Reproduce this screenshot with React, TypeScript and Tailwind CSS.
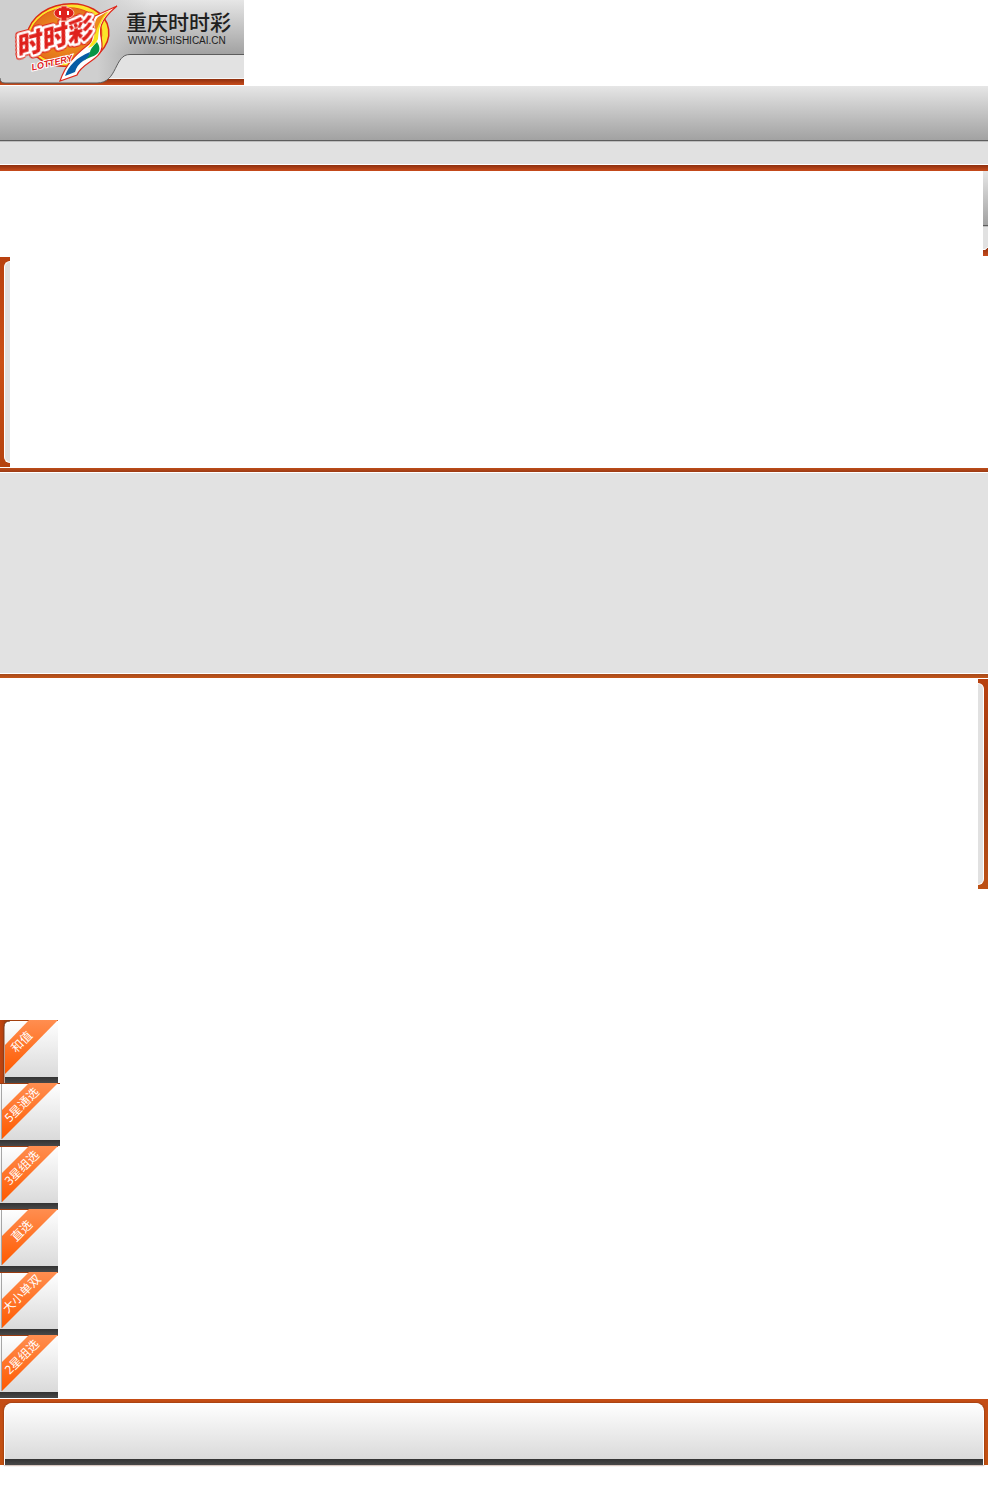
const tiles = [
  { label: "和值", first: true, width: "w-[58px]" },
  { label: "5星通选", first: false, width: "w-[60px]" },
  { label: "3星组选", first: false, width: "w-[58px]" },
  { label: "直选", first: false, width: "w-[58px]" },
  { label: "大小单双", first: false, width: "w-[58px]" },
  { label: "2星组选", first: false, width: "w-[58px]" },
];

function Logo() {
  return (
    <svg width="244" height="85" viewBox="0 0 244 85" role="img" aria-label="重庆时时彩" className="block">
      <defs>
        <linearGradient id="steel" x1="0" y1="0" x2="0" y2="1">
          <stop offset="0" stopColor="#e6e6e6" />
          <stop offset="1" stopColor="#a2a2a2" />
        </linearGradient>
        <linearGradient id="brushed" gradientUnits="userSpaceOnUse" x1="0" y1="0" x2="0" y2="54">
          <stop offset="0" stopColor="#e6e6e6" />
          <stop offset="1" stopColor="#a2a2a2" />
        </linearGradient>
        <linearGradient id="plate" x1="0" y1="0" x2="1" y2="0">
          <stop offset="0" stopColor="#cfcfcf" />
          <stop offset="0.4" stopColor="#cfcfcf" />
          <stop offset="0.62" stopColor="#cccccc" stopOpacity="0" />
        </linearGradient>
        <linearGradient id="rust" x1="0" y1="0" x2="0" y2="1">
          <stop offset="0" stopColor="#8e2f0e" />
          <stop offset="1" stopColor="#c84c1c" />
        </linearGradient>
        <radialGradient id="sun">
          <stop offset="0" stopColor="#f2a01c" />
          <stop offset="1" stopColor="#e3701c" />
        </radialGradient>
      </defs>
      <rect width="244" height="85" fill="#e2e2e2" />
      <rect y="78" width="244" height="1" fill="#f6f6f6" />
      <rect y="79" width="244" height="6" fill="url(#rust)" />
      <path d="M0 0H244V54H130C114 54 118 83 97 83H5Q0 83 0 78Z" fill="url(#brushed)" />
      <path d="M0 0H244V54H130C114 54 118 83 97 83H5Q0 83 0 78Z" fill="url(#plate)" />
      <path d="M244 54.5H130C114 54 118 83 97 83H5Q0 83 0 78" fill="none" stroke="#5d5d5d" />
      <ellipse cx="68" cy="35" rx="41" ry="31" transform="rotate(-8 68 35)" fill="#fbe62a" stroke="#d92c19" strokeWidth="1.5" />
      <ellipse cx="66" cy="35" rx="36" ry="27" transform="rotate(-8 66 35)" fill="url(#sun)" stroke="#e9501c" />
      <path d="M117 6L95 16C88 26 96 38 89 44C81 51 67 60 60 81L77 75C81 63 101 60 102 47C103 34 92 27 117 6Z" fill="#fff" stroke="#e0281b" strokeWidth="1.2" />
      <path d="M111 10L98 18C92 25 97 35 92 42L88 48Q95 46 98 39C99 30 99 21 111 10Z" fill="#f8e51d" />
      <path d="M108 11L98 17C93 22 96 29 95 34C98 27 100 19 108 11Z" fill="#ee8a1b" />
      <path d="M97 42Q104 53 91 57Q86 59 83 61Q90 55 90 52Q90 49 97 42Z" fill="#079445" />
      <path d="M90 52Q90 57 83 61Q77 65 75 72L65 76C69 65 76 58 90 52Z" fill="#075ca5" />
      <g
        transform="rotate(-15 20 56)"
        className="font-['Noto_Sans_CJK_SC',sans-serif] text-[26px] font-black italic filter-[drop-shadow(0_1px_0_#e0281b)_drop-shadow(-1px_0_0_#e0281b)_drop-shadow(0_-1px_0_#e0281b)]"
        fill="#df211c"
        stroke="#fff"
        strokeWidth="5"
        strokeLinejoin="round"
        paintOrder="stroke"
      >
        <text x="18" y="56">时时彩</text>
      </g>
      <ellipse cx="64" cy="13" rx="10" ry="6" fill="#df211c" stroke="#f6b7a2" />
      <path d="M61 6H67V21H61Z" fill="#df211c" stroke="#f6b7a2" />
      <ellipse cx="64" cy="13" rx="9" ry="5" fill="#df211c" />
      <path d="M59 11H61V15H59ZM67 11H69V15H67Z" fill="#fff" />
      <g transform="rotate(-13 34 69)">
        <text x="32" y="70" className="font-['Liberation_Sans',sans-serif] text-[9px] font-bold italic" fill="#df211c" stroke="#fff" strokeWidth="2" paintOrder="stroke">LOTTERY</text>
      </g>
      <text x="126" y="30" className="font-['Noto_Sans_CJK_SC',sans-serif] text-[21px] font-medium" fill="#202020">重庆时时彩</text>
      <text x="128" y="44" className="font-['Liberation_Sans',sans-serif] text-[10px]" fill="#202020">WWW.SHISHICAI.CN</text>
    </svg>
  );
}

function Tile({ label, first, width }: { label: string; first: boolean; width: string }) {
  return (
    <li className={`relative flex h-[63px] ${width} ${first ? "bg-[linear-gradient(90deg,#c2450f,#b0400f_4px,#fff_4px)]" : "bg-white"}`}>
      <a href="#bets" className="block h-full w-full">
        <svg width="100%" height="63" className="block" aria-hidden="true">
          <defs>
            <linearGradient id="silver" x1="0" y1="0" x2="0" y2="1">
              <stop offset="0" stopColor="#ffffff" />
              <stop offset="1" stopColor="#dadada" />
            </linearGradient>
            <linearGradient id="ribbon" x1="0" y1="0" x2="0" y2="1">
              <stop offset="0" stopColor="#ff8e50" />
              <stop offset="1" stopColor="#ff5a00" />
            </linearGradient>
            <linearGradient id="coal" x1="0" y1="0" x2="0" y2="1">
              <stop offset="0" stopColor="#333333" />
              <stop offset="1" stopColor="#484848" />
            </linearGradient>
          </defs>
          {first ? (
            <>
              <rect x="4" width="54" height="8" fill="#a4400f" />
              <path d="M4 63V7Q4 1 10 1H58V63Z" fill="#fff" />
              <path d="M5 57V7Q5 1 11 1H58V57Z" fill="url(#silver)" />
              <path d="M4 63V7Q4 1 10 1" fill="none" stroke="#7a3a1c" />
              <rect x="5" y="57" width="53" height="6" fill="url(#coal)" />
              <path d="M29 0H58L5 54V25Z" fill="url(#ribbon)" />
            </>
          ) : (
            <>
              <rect width="100%" height="57" fill="url(#silver)" />
              <rect width="100%" height="1" fill="#9c3c10" />
              <rect x="1" y="1" width="1" height="55" fill="#a6a6a6" />
              <rect y="57" width="100%" height="6" fill="url(#coal)" />
              <path d="M29 0H58L2 56V27Z" fill="url(#ribbon)" />
            </>
          )}
        </svg>
        <span className="absolute top-0 left-0 flex h-[44px] w-[44px] -rotate-45 items-center justify-center text-xs leading-none whitespace-nowrap text-white">
          {label}
        </span>
      </a>
    </li>
  );
}

export default function App() {
  return (
    <div className="flex flex-col bg-white pb-[35px] font-['Noto_Sans','Noto_Sans_CJK_SC',sans-serif]">
      <header>
        <a href="#home" className="block w-fit">
          <Logo />
        </a>
        <div className="mt-px flex flex-col">
          <div className="h-[54px] bg-linear-to-b from-[#e6e6e6] to-[#a2a2a2]" />
          <div className="h-px bg-[#5d5d5d]" />
          <div className="h-px bg-[#bdbdbd]" />
          <div className="h-[22px] bg-[#e1e1e1]" />
          <div className="h-px bg-white" />
          <div className="h-1.5 bg-linear-to-b from-[#8e2f0e] to-[#c84c1c]" />
        </div>
        <div className="flex justify-end">
          <svg width="5" height="85" className="block" aria-hidden="true">
            <rect width="5" height="85" fill="#e1e1e1" />
            <rect width="5" height="54" fill="url(#steel)" />
            <rect y="54" width="5" height="1" fill="#5d5d5d" />
            <rect y="55" width="5" height="1" fill="#bdbdbd" />
            <path d="M0 79L2 79L5 76V85H0Z" fill="url(#rust)" />
            <path d="M0 78.500H2L5 76" fill="none" stroke="#fff" />
          </svg>
        </div>
      </header>

      <main className="flex flex-col">
        <div className="mt-px flex h-[210px] w-2.5 bg-linear-to-b from-[#b8410f] via-[#cb5016] to-[#b5430f] py-1 pl-1">
          <div className="w-full rounded-l-md border-y border-l border-white bg-[#e1e1e1]" />
        </div>
        <div className="mt-px flex h-[210px] flex-col">
          <div className="h-1 bg-linear-to-b from-[#bd4c19] to-[#9c3b14]" />
          <div className="my-px flex-1 bg-[#e2e2e2]" />
          <div className="h-1 bg-linear-to-b from-[#a64a1a] to-[#c45519]" />
        </div>
        <div className="mt-px flex h-[210px] w-2.5 self-end bg-linear-to-b from-[#b8410f] via-[#9d3d13] to-[#bd5115] py-1 pr-1">
          <div className="w-full rounded-r-md border-y border-r border-white bg-[#e1e1e1]" />
        </div>
        <nav aria-label="玩法" className="mt-[131px]">
          <ul className="flex flex-col">
            {tiles.map((tile) => (
              <Tile key={tile.label} {...tile} />
            ))}
          </ul>
        </nav>
      </main>

      <footer className="mt-px bg-linear-to-b from-[#c44d16] to-[#c2500f] px-1 pt-1">
        <div className="rounded-t-lg bg-white px-px shadow-[0_0_2px_#6b2d10]">
          <div className="h-14 rounded-t-lg bg-linear-to-b from-white to-[#dadada]" />
          <div className="h-1.5 bg-linear-to-b from-[#333333] to-[#484848]" />
        </div>
      </footer>
    </div>
  );
}
